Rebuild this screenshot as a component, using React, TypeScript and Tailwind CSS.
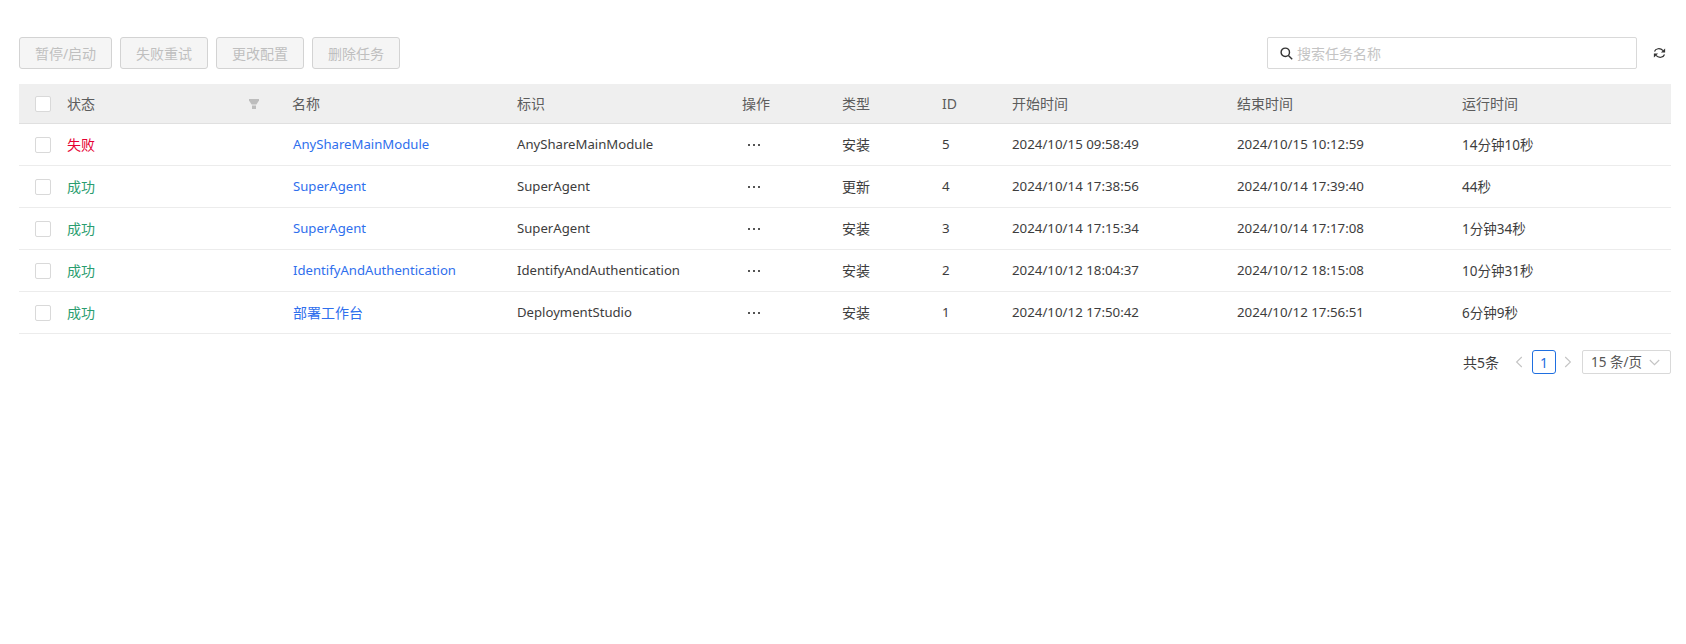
const font = "font-['Noto_Sans','Noto_Sans_CJK_SC',sans-serif]";

type Row = { status: string; ok: boolean; name: string; nameCjk?: boolean; ident: string; type: string; id: number; start: string; end: string; dur: string };
const rows: Row[] = [
  { status: "失败", ok: false, name: "AnyShareMainModule", ident: "AnyShareMainModule", type: "安装", id: 5, start: "2024/10/15 09:58:49", end: "2024/10/15 10:12:59", dur: "14分钟10秒" },
  { status: "成功", ok: true, name: "SuperAgent", ident: "SuperAgent", type: "更新", id: 4, start: "2024/10/14 17:38:56", end: "2024/10/14 17:39:40", dur: "44秒" },
  { status: "成功", ok: true, name: "SuperAgent", ident: "SuperAgent", type: "安装", id: 3, start: "2024/10/14 17:15:34", end: "2024/10/14 17:17:08", dur: "1分钟34秒" },
  { status: "成功", ok: true, name: "IdentifyAndAuthentication", ident: "IdentifyAndAuthentication", type: "安装", id: 2, start: "2024/10/12 18:04:37", end: "2024/10/12 18:15:08", dur: "10分钟31秒" },
  { status: "成功", ok: true, name: "部署工作台", nameCjk: true, ident: "DeploymentStudio", type: "安装", id: 1, start: "2024/10/12 17:50:42", end: "2024/10/12 17:56:51", dur: "6分钟9秒" },
];

const grid = "grid grid-cols-[48px_225px_225px_225px_100px_100px_70px_225px_225px_1fr] items-center";

function Box() {
  return <span className="block ml-[16px] w-[16px] h-[16px] rounded-[2px] border border-[#d9d9d9] bg-white" />;
}

function Btn({ label, w }: { label: string; w: string }) {
  return (
    <button className={`h-[32px] ${w} rounded-[3px] border border-[#d3d3d3] bg-[#f5f5f5] text-[14px] text-[#bfbfbf]`}>{label}</button>
  );
}

export default function App() {
  return (
    <div className={`${font} w-[1686px] h-[644px] bg-white pl-[19px] pt-[37px] text-[14px] text-[#3d3d3d]`}>
      <div className="flex items-center justify-between w-[1652px] h-[32px]">
        <div className="flex gap-[8px]">
          <Btn label="暂停/启动" w="w-[93px]" />
          <Btn label="失败重试" w="w-[88px]" />
          <Btn label="更改配置" w="w-[88px]" />
          <Btn label="删除任务" w="w-[88px]" />
        </div>
        <div className="flex items-center">
          <div className="flex items-center w-[370px] h-[32px] rounded-[2px] border border-[#d9d9d9] pl-[12px] gap-[4px]">
            <svg width="13" height="13" viewBox="0 0 13 13" fill="none" stroke="#333" strokeWidth="1.4"><circle cx="5.3" cy="5.3" r="4.2" /><path d="M8.4 8.4 12.2 12.2" /></svg>
            <span className="text-[#c4c4c4]">搜索任务名称</span>
          </div>
          <svg className="ml-[16px] mr-[5px]" width="13" height="14" viewBox="0 0 12 14" fill="none" stroke="#333" strokeWidth="1.2">
            <path d="M1 5.5C2 2.5 6.5 1.5 9.6 4.6" />
            <path d="M11.6 2.4v4.2H7.4z" fill="#333" stroke="none" />
            <path d="M11 8.5C10 11.5 5.5 12.5 2.4 9.4" />
            <path d="M0.4 11.6V7.4h4.2z" fill="#333" stroke="none" />
          </svg>
        </div>
      </div>
      <div className="w-[1652px] mt-[15px]">
        <div className={`${grid} h-[40px] bg-[#efefef] border-b border-[#e0e0e0] text-[#5c5c5c]`}>
          <Box />
          <div className="flex items-center justify-between pr-[33px]">
            <span>状态</span>
            <svg width="10" height="10" viewBox="0 0 10 10" fill="#bdbdbd"><path d="M0 0h10v1.5L7.4 5.5H2.6L0 1.5z" /><path d="M3 6.5h4V10H3z" /></svg>
          </div>
          <span>名称</span>
          <span>标识</span>
          <span>操作</span>
          <span>类型</span>
          <span>ID</span>
          <span>开始时间</span>
          <span>结束时间</span>
          <span>运行时间</span>
        </div>
        {rows.map((r) => (
          <div key={r.id} className={`${grid} h-[42px] border-b border-[#ececec]`}>
            <Box />
            <span className={r.ok ? "text-[#2a9d6f]" : "text-[#e60033]"}>{r.status}</span>
            <span className={`pl-[1px] text-[#2f6fed] whitespace-nowrap ${r.nameCjk ? "" : "text-[13.15px] pt-[1px]"}`}>{r.name}</span>
            <span className="text-[13.15px] pt-[1px] whitespace-nowrap">{r.ident}</span>
            <span className="pl-[6px] flex gap-[3px]">
              <i className="block w-[2px] h-[2px] bg-[#555]" />
              <i className="block w-[2px] h-[2px] bg-[#555]" />
              <i className="block w-[2px] h-[2px] bg-[#555]" />
            </span>
            <span>{r.type}</span>
            <span className="text-[13.3px] pt-[1px]">{r.id}</span>
            <span className="text-[13.3px] pt-[1px]">{r.start}</span>
            <span className="text-[13.3px] pt-[1px]">{r.end}</span>
            <span className="text-[13.5px] pt-[1px]">{r.dur}</span>
          </div>
        ))}
      </div>
      <div className="flex items-center justify-end w-[1652px] h-[24px] mt-[16px]">
        <span>共5条</span>
        <svg className="ml-[16px]" width="8" height="12" viewBox="0 0 8 12" fill="none" stroke="#c4c4c4" strokeWidth="1.1"><path d="M6.8 1 1.6 6l5.2 5" /></svg>
        <span className="ml-[9px] flex items-center justify-center w-[24px] h-[24px] rounded-[3px] border border-[#1f6fe0] text-[#1f6fe0]">1</span>
        <svg className="ml-[8px]" width="8" height="12" viewBox="0 0 8 12" fill="none" stroke="#c4c4c4" strokeWidth="1.1"><path d="M1.2 1l5.2 5-5.2 5" /></svg>
        <div className="ml-[10px] flex items-center justify-between w-[89px] h-[24px] rounded-[2px] border border-[#d9d9d9] pl-[8px] pr-[10px] text-[#555]">
          <span className="text-[13.5px] whitespace-nowrap">15 条/页</span>
          <svg width="11" height="7" viewBox="0 0 11 7" fill="none" stroke="#c4c4c4" strokeWidth="1.1"><path d="M0.8 1l4.7 4.7L10.2 1" /></svg>
        </div>
      </div>
    </div>
  );
}
